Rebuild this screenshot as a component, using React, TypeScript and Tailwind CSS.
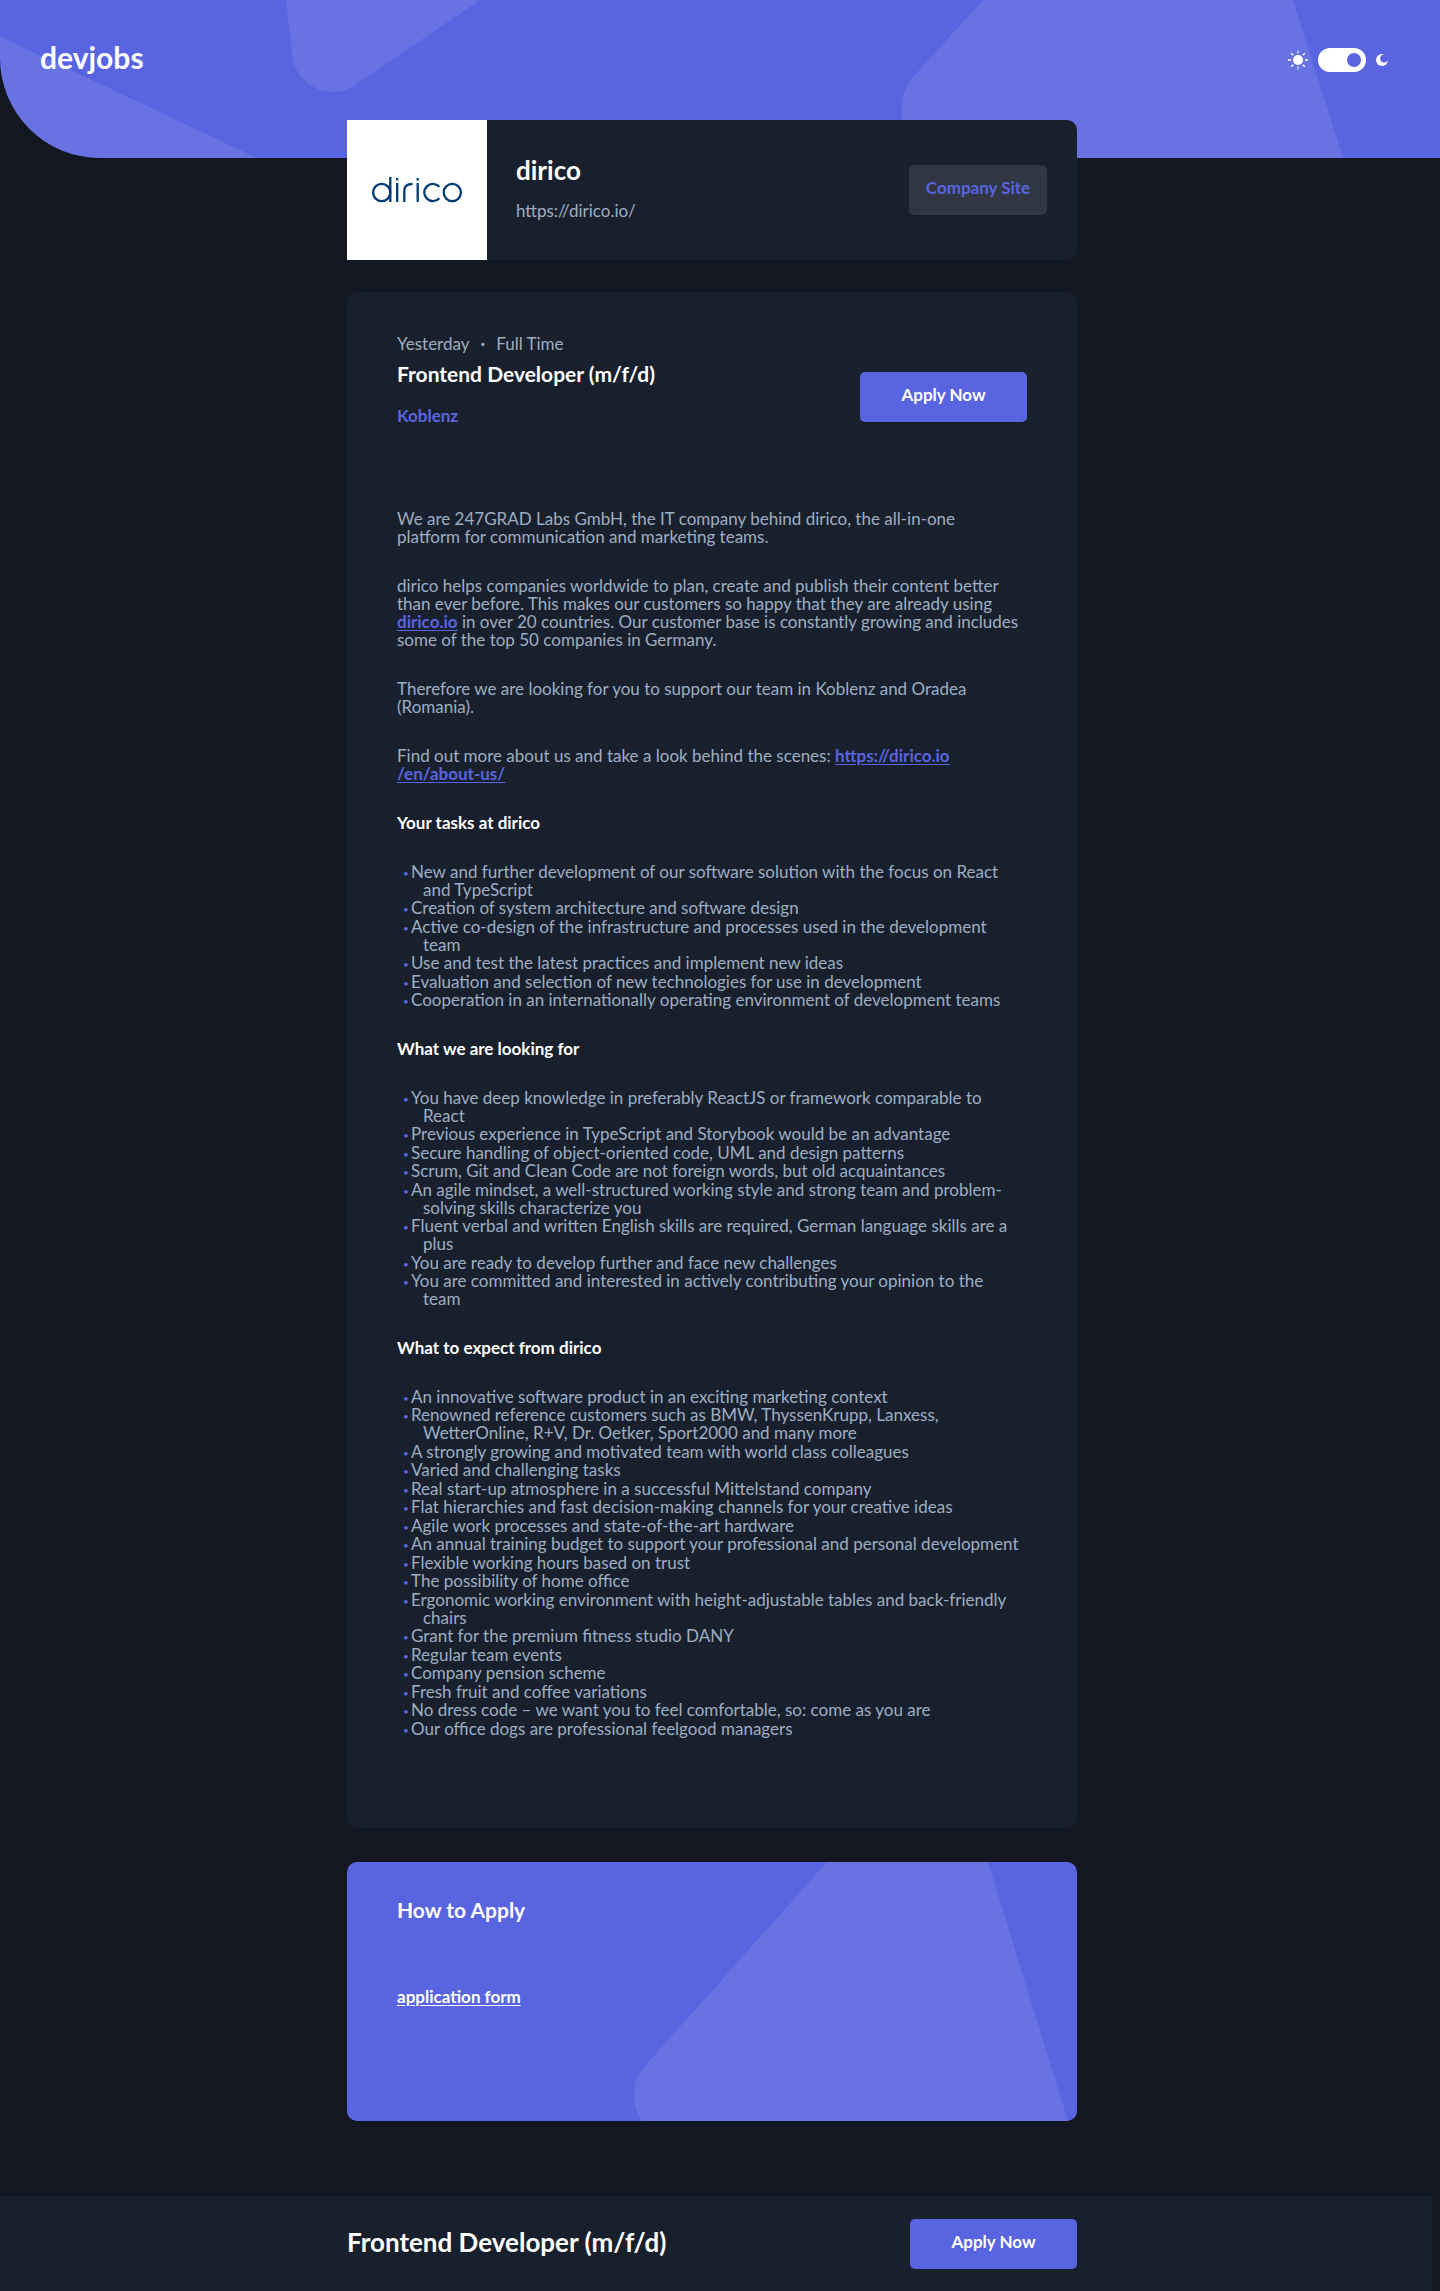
import React, { useState } from "react";

const tasks: string[] = [
  "New and further development of our software solution with the focus on React and TypeScript",
  "Creation of system architecture and software design",
  "Active co-design of the infrastructure and processes used in the development team",
  "Use and test the latest practices and implement new ideas",
  "Evaluation and selection of new technologies for use in development",
  "Cooperation in an internationally operating environment of development teams",
];

const requirements: string[] = [
  "You have deep knowledge in preferably ReactJS or framework comparable to React",
  "Previous experience in TypeScript and Storybook would be an advantage",
  "Secure handling of object-oriented code, UML and design patterns",
  "Scrum, Git and Clean Code are not foreign words, but old acquaintances",
  "An agile mindset, a well-structured working style and strong team and problem-solving skills characterize you",
  "Fluent verbal and written English skills are required, German language skills are a plus",
  "You are ready to develop further and face new challenges",
  "You are committed and interested in actively contributing your opinion to the team",
];

const benefits: string[] = [
  "An innovative software product in an exciting marketing context",
  "Renowned reference customers such as BMW, ThyssenKrupp, Lanxess, WetterOnline, R+V, Dr. Oetker, Sport2000 and many more",
  "A strongly growing and motivated team with world class colleagues",
  "Varied and challenging tasks",
  "Real start-up atmosphere in a successful Mittelstand company",
  "Flat hierarchies and fast decision-making channels for your creative ideas",
  "Agile work processes and state-of-the-art hardware",
  "An annual training budget to support your professional and personal development",
  "Flexible working hours based on trust",
  "The possibility of home office",
  "Ergonomic working environment with height-adjustable tables and back-friendly chairs",
  "Grant for the premium fitness studio DANY",
  "Regular team events",
  "Company pension scheme",
  "Fresh fruit and coffee variations",
  "No dress code – we want you to feel comfortable, so: come as you are",
  "Our office dogs are professional feelgood managers",
];

function BulletList({ items }: { items: string[] }) {
  return (
    <ul className="pr-1 pl-[26px]">
      {items.map((item) => (
        <li key={item} className="-indent-5 even:pb-px">
          <span className="inline-block w-2 indent-0 align-[1px] text-[10px] leading-none text-[#5964e0]">•</span>
          {item}
        </li>
      ))}
    </ul>
  );
}

function SectionTitle({ children }: { children: React.ReactNode }) {
  return <h3 className="pb-px font-bold text-white">{children}</h3>;
}

function Paragraph({ children }: { children: React.ReactNode }) {
  return <p className="pr-1.5 pb-px">{children}</p>;
}

function TextLink({ children }: { children: React.ReactNode }) {
  return (
    <a href="#" className="font-bold text-[#5964e0] underline underline-offset-2">
      {children}
    </a>
  );
}

function ApplyButton() {
  return (
    <button
      type="button"
      className="h-[50px] w-[167px] shrink-0 rounded-[5px] bg-[#5964e0] pb-1 font-bold text-white"
    >
      Apply Now
    </button>
  );
}

function ThemeSwitch() {
  const [dark, setDark] = useState(true);
  return (
    <div className="flex items-center gap-2.5 pt-1.5">
      <svg width="20" height="20" viewBox="0 0 20 20" aria-hidden="true">
        <circle cx="10" cy="10" r="5" fill="#fff" />
        <g stroke="#fff" strokeWidth="1.4">
          <path d="M0 10h3M17 10h3M3.2 3.2l2 2M14.8 14.8l2 2M3.2 16.8l2-2M14.8 5.2l2-2" />
          <path d="M10 .5v3M10 16.500v3" strokeOpacity=".5" strokeWidth="2" />
        </g>
      </svg>
      <label className="relative flex h-6 w-12 cursor-pointer items-center rounded-full bg-white px-[5px]">
        <input
          type="checkbox"
          role="switch"
          aria-label="Dark mode"
          checked={dark}
          onChange={(e) => setDark(e.target.checked)}
          className="peer absolute inset-0 cursor-pointer opacity-0"
        />
        <span className="size-3.5 rounded-full bg-[#5964e0] peer-checked:ml-auto" />
      </label>
      <svg width="12" height="12" viewBox="0 0 12 12" aria-hidden="true">
        <circle cx="6" cy="6" r="6" fill="#fff" />
        <circle cx="8.200" cy="4.600" r="4" fill="#5964e0" />
        <path d="M7.500 0H12V4.500L10.500 3z" fill="#5964e0" />
      </svg>
    </div>
  );
}

function HeaderPattern() {
  return (
    <svg
      className="absolute inset-0 size-full"
      viewBox="0 0 1440 158"
      preserveAspectRatio="xMidYMid slice"
      aria-hidden="true"
    >
      <g fill="#fff" fillOpacity=".09">
        <path d="M0 36.500L257 158H0z" />
        <path d="M286 0L292 54C294 76 312 92 333 92C343 92 351 89 358 83L480 0z" />
        <path d="M983 0L914 76C897 93 897 135 916 158H1343L1293 0z" />
      </g>
    </svg>
  );
}

export default function App() {
  return (
    <div className="flex min-h-screen flex-col bg-[#121721] font-[Lato,sans-serif] text-[17px] leading-[18px] text-[#9daec2]">
      <header className="relative h-[158px] overflow-hidden rounded-bl-[100px] bg-[#5964e0]">
        <HeaderPattern />
        <div className="relative flex items-center justify-between pt-9 pr-[52px] pl-10">
          <a href="#" className="text-[30px] leading-[42px] font-bold text-white">
            devjobs
          </a>
          <ThemeSwitch />
        </div>
      </header>

      <div className="pr-4">
        <main className="relative mx-auto -mt-[38px] max-w-[730px]">
          <section className="flex h-[140px] items-center rounded-r-[10px] bg-[#19202d]">
            <div className="flex size-[140px] shrink-0 items-center justify-center bg-white">
              <svg
                width="90"
                height="26"
                viewBox="0 0 90 26"
                fill="none"
                stroke="#003b74"
                strokeWidth="2.300"
                role="img"
                aria-label="dirico"
              >
                <circle cx="9.700" cy="15.500" r="8.600" />
                <path d="M18.300 0V25M25.200 6V25M32.300 25V13.500C32.300 9 35.500 7 40.500 7M45.700 6V25" />
                <path d="M25.200 1V3.500M45.700 1V3.500" />
                <path d="M67.300 9.800A8.600 8.600 0 1 0 67.300 21.200" />
                <circle cx="80.300" cy="15.500" r="8.600" />
              </svg>
            </div>
            <div className="flex flex-1 items-center justify-between pr-[30px] pl-[29px]">
              <div className="pb-1">
                <h1 className="text-[26px] leading-7 font-bold text-white">dirico</h1>
                <p className="mt-[18px]">https://dirico.io/</p>
              </div>
              <a
                href="#"
                className="flex h-[50px] w-[138px] items-center justify-center rounded-[5px] bg-[#303642] pb-1 font-bold text-[#5964e0]"
              >
                Company Site
              </a>
            </div>
          </section>

          <article className="mt-8 rounded-[10px] bg-[#19202d] px-[50px] pt-[43px] pb-[90px]">
            <div className="flex items-center justify-between">
              <div className="pb-[34px]">
                <p className="flex gap-[11px]">
                  <span>Yesterday</span>
                  <span className="font-bold">·</span>
                  <span>Full Time</span>
                </p>
                <h2 className="mt-2 text-[21px] leading-[26px] font-bold text-white">
                  Frontend Developer (m/f/d)
                </h2>
                <p className="mt-5 font-bold text-[#5964e0]">Koblenz</p>
              </div>
              <ApplyButton />
            </div>

            <div className="mt-[51px] flex flex-col gap-[30px]">
              <Paragraph>
                We are 247GRAD Labs GmbH, the IT company behind dirico, the all-in-one platform for
                communication and marketing teams.
              </Paragraph>
              <Paragraph>
                dirico helps companies worldwide to plan, create and publish their content better than
                ever before. This makes our customers so happy that they are already using{" "}
                <TextLink>dirico.io</TextLink> in over 20 countries. Our customer base is constantly
                growing and includes some of the top 50 companies in Germany.
              </Paragraph>
              <Paragraph>
                Therefore we are looking for you to support our team in Koblenz and Oradea (Romania).
              </Paragraph>
              <Paragraph>
                Find out more about us and take a look behind the scenes:{" "}
                <TextLink>
                  https://dirico.io
                  <wbr />
                  /en/about-us/
                </TextLink>
              </Paragraph>
              <SectionTitle>Your tasks at dirico</SectionTitle>
              <BulletList items={tasks} />
              <SectionTitle>What we are looking for</SectionTitle>
              <BulletList items={requirements} />
              <SectionTitle>What to expect from dirico</SectionTitle>
              <BulletList items={benefits} />
            </div>
          </article>

          <section className="relative mt-[34px] h-[259px] overflow-hidden rounded-[10px] bg-[#5964e0] px-[50px] pt-[34px]">
            <svg className="absolute inset-y-0 right-0 h-full w-[450px]" viewBox="0 0 450 259" aria-hidden="true">
              <path d="M200 0L17 205C4 219 4 244 15 259H441L361 0z" fill="#fff" fillOpacity=".09" />
            </svg>
            <div className="relative text-white">
              <h2 className="text-[21px] leading-7 font-bold">How to Apply</h2>
              <a href="#" className="mt-16 inline-block font-bold underline underline-offset-2">
                application form
              </a>
            </div>
          </section>
        </main>
      </div>

      <footer className="mt-[75px] mr-2 bg-[#19202d] pr-2">
        <div className="mx-auto flex h-24 max-w-[730px] items-center justify-between">
          <h2 className="pb-1 text-[26px] leading-7 font-bold text-white">Frontend Developer (m/f/d)</h2>
          <ApplyButton />
        </div>
      </footer>
    </div>
  );
}
